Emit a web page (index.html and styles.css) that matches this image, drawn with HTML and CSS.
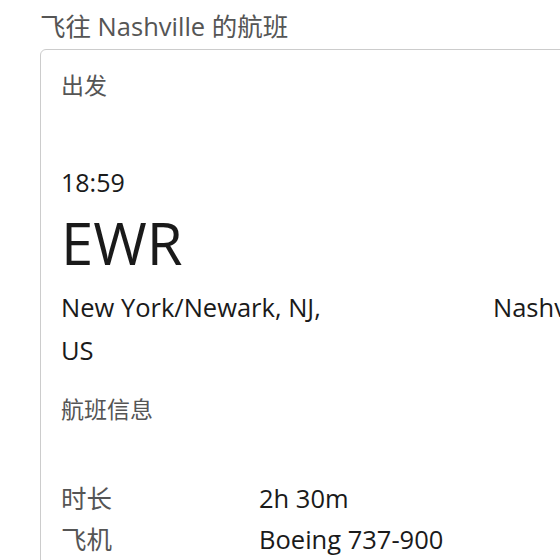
FILE: index.html
```html
<!DOCTYPE html>
<html lang="zh">
<head>
    <meta charset="UTF-8">
    <meta name="viewport" content="width=device-width, initial-scale=1.0">
    <title>航班</title>
    <link rel="stylesheet" href="styles.css">
</head>
<body>
    <div class="page">
        <h2 class="page-title">飞往 Nashville 的航班</h2>

        <div class="card">
            <div class="section-label">出发</div>

            <div class="route">
                <div class="time">18:59</div>
                <div class="code">EWR</div>
                <div class="city">New York/Newark, NJ, US</div>
                <div class="city arrive">Nashville, TN, US</div>
            </div>

            <div class="section-label">航班信息</div>

            <div class="details">
                <div class="detail-row">
                    <span class="detail-label">时长</span>
                    <span class="detail-value">2h 30m</span>
                </div>
                <div class="detail-row">
                    <span class="detail-label">飞机</span>
                    <span class="detail-value">Boeing 737-900</span>
                </div>
            </div>
        </div>
    </div>
</body>
</html>
```

FILE: styles.css
```css
html,
body {
    margin: 0;
    overflow: hidden;
    background-color: white;
}

body {
    font-family: "Open Sans", "Noto Sans CJK SC", sans-serif;
    color: #1a1a1a;
}

.page {
    padding: 8px 0 0 40px;
}

.page-title {
    margin: 0 0 5px 0;
    font-size: 25.5px;
    font-weight: normal;
    line-height: 36px;
    color: #555;
}

.card {
    width: 900px;
    border: 1px solid #ccc;
    border-radius: 6px;
    padding: 18px 20px 20px 20px;
}

.section-label {
    font-size: 23px;
    line-height: 34px;
    color: #555;
}

/* departure in the first column, arrival city in the third */
.route {
    display: grid;
    grid-template-columns: 270px 162px 1fr;
    margin-top: 62px;
    margin-bottom: 20px;
}

.time {
    grid-column: 1;
    grid-row: 1;
    font-size: 25px;
    line-height: 36px;
}

.code {
    grid-column: 1;
    grid-row: 2;
    margin-top: 3px;
    font-size: 58px;
    line-height: 80px;
}

.city {
    grid-column: 1;
    grid-row: 3;
    margin-top: 3px;
    font-size: 25.5px;
    line-height: 43px;
}

.city.arrive {
    grid-column: 3;
    white-space: nowrap;
}

.details {
    margin-top: 52px;
}

.detail-row {
    display: flex;
    font-size: 25.5px;
    line-height: 41px;
}

.detail-label {
    width: 198px;
    color: #555;
}
```
